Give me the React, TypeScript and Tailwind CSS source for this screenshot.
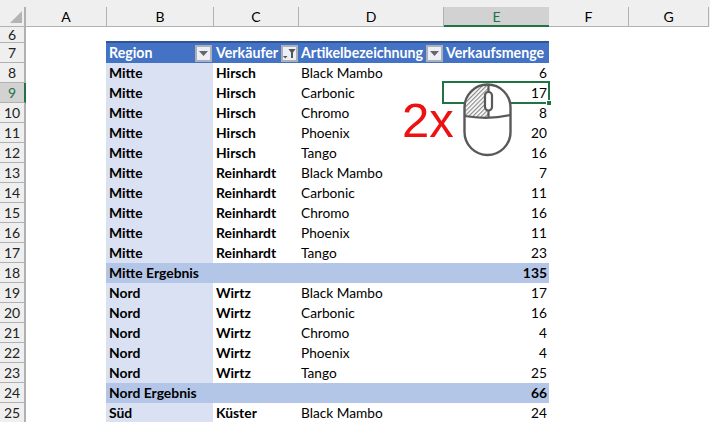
const columns = [
  { name: "A", width: "w-[81px]" },
  { name: "B", width: "w-[107px]" },
  { name: "C", width: "w-[85px]" },
  { name: "D", width: "w-[145px]" },
  { name: "E", width: "w-[105px]" },
  { name: "F", width: "w-[80px]" },
  { name: "G", width: "w-[80px]" },
]

type Row =
  | { n: number; region: string; seller: string; item: string; qty: number }
  | { n: number; total: string; qty: number }

const rows: Row[] = [
  { n: 8, region: "Mitte", seller: "Hirsch", item: "Black Mambo", qty: 6 },
  { n: 9, region: "Mitte", seller: "Hirsch", item: "Carbonic", qty: 17 },
  { n: 10, region: "Mitte", seller: "Hirsch", item: "Chromo", qty: 8 },
  { n: 11, region: "Mitte", seller: "Hirsch", item: "Phoenix", qty: 20 },
  { n: 12, region: "Mitte", seller: "Hirsch", item: "Tango", qty: 16 },
  { n: 13, region: "Mitte", seller: "Reinhardt", item: "Black Mambo", qty: 7 },
  { n: 14, region: "Mitte", seller: "Reinhardt", item: "Carbonic", qty: 11 },
  { n: 15, region: "Mitte", seller: "Reinhardt", item: "Chromo", qty: 16 },
  { n: 16, region: "Mitte", seller: "Reinhardt", item: "Phoenix", qty: 11 },
  { n: 17, region: "Mitte", seller: "Reinhardt", item: "Tango", qty: 23 },
  { n: 18, total: "Mitte Ergebnis", qty: 135 },
  { n: 19, region: "Nord", seller: "Wirtz", item: "Black Mambo", qty: 17 },
  { n: 20, region: "Nord", seller: "Wirtz", item: "Carbonic", qty: 16 },
  { n: 21, region: "Nord", seller: "Wirtz", item: "Chromo", qty: 4 },
  { n: 22, region: "Nord", seller: "Wirtz", item: "Phoenix", qty: 4 },
  { n: 23, region: "Nord", seller: "Wirtz", item: "Tango", qty: 25 },
  { n: 24, total: "Nord Ergebnis", qty: 66 },
  { n: 25, region: "Süd", seller: "Küster", item: "Black Mambo", qty: 24 },
]

function RowHead({ n, tall }: { n: number; tall?: boolean }) {
  const active = n === 9
  return (
    <div
      className={`w-[26px] shrink-0 flex items-center justify-center border-b border-[#b1b1b1] border-r-2 text-[14px] ${tall ? "h-[16px]" : "h-[20px]"} ${
        active ? "bg-[#d2d2d2] border-r-[#217346] text-[#217346]" : "bg-[#efefef] border-r-[#b1b1b1] text-[#222]"
      }`}
    >
      {n}
    </div>
  )
}

function Filter({ active }: { active?: boolean }) {
  return (
    <span className="w-[17px] h-[17px] shrink-0 bg-[#eceff6] border-2 border-[#adb0b6] flex items-center justify-center">
      {active ? (
        <svg width="13" height="11" viewBox="0 0 13 11">
          <path d="M5.500 1h7L10 4.500V10H8V4.500z" fill="#555" />
          <path d="M0 8h4.500L2.250 10.500z" fill="#555" />
        </svg>
      ) : (
        <svg width="9" height="5" viewBox="0 0 9 5">
          <path d="M0 0h9L4.500 5z" fill="#666" />
        </svg>
      )}
    </span>
  )
}

function MouseIcon() {
  return (
    <svg width="50" height="76" viewBox="0 0 50 76" className="absolute left-[463px] top-[83px]">
      <defs>
        <pattern id="hatch" width="3" height="3" patternUnits="userSpaceOnUse" patternTransform="rotate(45)">
          <rect width="3" height="3" fill="#fff" />
          <rect width="1.200" height="3" fill="#8a8a8a" />
        </pattern>
      </defs>
      <rect x="1.500" y="1.500" width="46" height="70.500" rx="23" fill="#fff" />
      <path d="M25.500 1.500C10 1.500 1.500 14 1.500 33L25.500 35z" fill="url(#hatch)" />
      <rect x="1.500" y="1.500" width="46" height="70.500" rx="23" fill="none" stroke="#595959" strokeWidth="2.400" />
      <path d="M1.500 33Q25 37 47.500 32" fill="none" stroke="#595959" strokeWidth="2.200" />
      <path d="M25.500 1.500V9M25.500 27V35" stroke="#595959" strokeWidth="2.200" />
      <rect x="22" y="9" width="7" height="18.500" rx="3.500" fill="#fff" stroke="#595959" strokeWidth="2.200" />
    </svg>
  )
}

export default function App() {
  return (
    <div className="relative w-[710px] h-[422px] overflow-hidden bg-white font-['Lato','Liberation_Sans',sans-serif] text-[13.7px] text-black">
      {/* column headers */}
      <div className="flex h-[27px] bg-[#efefef] pt-[7px]">
        <div className="w-[26px] shrink-0 border-b border-[#b1b1b1] border-r-2 border-r-[#b1b1b1] relative">
          <svg width="12" height="12" viewBox="0 0 12 12" className="absolute left-[10px] top-[4px]">
            <path d="M12 0v12H0z" fill="#b4b4b4" />
          </svg>
        </div>
        {columns.map((c) => (
          <div
            key={c.name}
            className={`${c.width} shrink-0 flex items-center justify-center text-[14px] ${
              c.name === "E"
                ? "bg-[#d2d2d2] border-b-2 border-[#217346] text-[#217346]"
                : "border-b border-[#b1b1b1] border-r border-r-[#b1b1b1]"
            }`}
          >
            {c.name}
          </div>
        ))}
      </div>

      {/* row 6 with the table's top edge */}
      <div className="flex">
        <RowHead n={6} tall />
        <div className="flex-1 flex items-end pl-[80px]">
          <div className="w-[443px] h-[2px] bg-[#2f5597]" />
        </div>
      </div>

      {/* table head */}
      <div className="flex">
        <RowHead n={7} />
        <div className="w-[80px] shrink-0" />
        <div className="flex h-[20px] bg-[#4472c4] text-white font-bold text-[14.2px]">
          <div className="w-[107px] flex items-center justify-between pl-[3px] pr-[1px]">
            Region <Filter />
          </div>
          <div className="w-[85px] flex items-center justify-between pl-[3px]">
            Verkäufer <Filter active />
          </div>
          <div className="w-[145px] flex items-center justify-between pl-[3px]">
            Artikelbezeichnung <Filter />
          </div>
          <div className="w-[106px] flex items-center pl-[3px]">Verkaufsmenge</div>
        </div>
      </div>

      {/* data rows */}
      {rows.map((r) => (
        <div key={r.n} className="flex">
          <RowHead n={r.n} />
          <div className="w-[80px] shrink-0" />
          {"total" in r ? (
            <div className="w-[443px] h-[20px] bg-[#b4c6e7] flex items-center justify-between pl-[3px] pr-[2px] font-bold text-[13.9px]">
              <span>{r.total}</span>
              <span>{r.qty}</span>
            </div>
          ) : (
            <div className="w-[443px] h-[20px] flex items-center">
              <div className="w-[107px] h-full bg-[#d9e1f2] flex items-center pl-[3px] font-bold text-[13.9px]">{r.region}</div>
              <div className="w-[85px] pl-[3px] font-bold text-[13.9px]">{r.seller}</div>
              <div className="w-[145px] pl-[3px]">{r.item}</div>
              <div className="w-[106px] pr-[2px] text-right">{r.qty}</div>
            </div>
          )}
        </div>
      ))}

      {/* selected cell */}
      <div className="absolute left-[442px] top-[81px] w-[108px] h-[23px] border-2 border-[#217346]" />
      <div className="absolute left-[546px] top-[100px] w-[6px] h-[6px] bg-[#217346] border border-white" />

      {/* double click hint */}
      <div className="absolute left-[402px] top-[90px] font-['Liberation_Sans',sans-serif] text-[49px] leading-[60px] text-[#ee1111]">2x</div>
      <MouseIcon />
    </div>
  )
}
